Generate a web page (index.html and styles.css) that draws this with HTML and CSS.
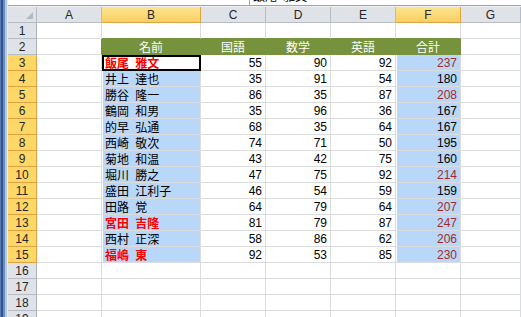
FILE: index.html
```html
<!DOCTYPE html>
<html>
	<head>
		<meta charset="UTF-8">
		<title>成績表</title>
		<link rel="stylesheet" href="styles.css">
	</head>
	<body>
		<div id="app">
			<div class="frame"></div>
			<div class="main">
				<div class="top">
					<div class="namebox"></div>
					<div class="fbar"><span>飯尾 雅文</span></div>
				</div>
				<div class="topgap"></div>
				<div class="sheet">
					<!-- 列見出し -->
					<div class="c corner"><i class="tri"></i></div>
					<div class="c hd">A</div>
					<div class="c hd sel">B</div>
					<div class="c hd">C</div>
					<div class="c hd">D</div>
					<div class="c hd">E</div>
					<div class="c hd sel">F</div>
					<div class="c hd">G</div>
					<!-- 1 -->
					<div class="c rh">1</div>
					<div class="c"></div>
					<div class="c gt"></div>
					<div class="c gt"></div>
					<div class="c gt"></div>
					<div class="c gt"></div>
					<div class="c gt"></div>
					<div class="c"></div>
					<!-- 2 -->
					<div class="c rh">2</div>
					<div class="c gl"></div>
					<div class="c g">名前</div>
					<div class="c g">国語</div>
					<div class="c g">数学</div>
					<div class="c g">英語</div>
					<div class="c g">合計</div>
					<div class="c"></div>
					<!-- 3 -->
					<div class="c rh sel">3</div>
					<div class="c"></div>
					<div class="c act nm">飯尾 雅文</div>
					<div class="c n">55</div>
					<div class="c n">90</div>
					<div class="c n">92</div>
					<div class="c n bl red">237</div>
					<div class="c"></div>
					<!-- 4 -->
					<div class="c rh sel">4</div>
					<div class="c"></div>
					<div class="c bl">井上 達也</div>
					<div class="c n">35</div>
					<div class="c n">91</div>
					<div class="c n">54</div>
					<div class="c n bl">180</div>
					<div class="c"></div>
					<!-- 5 -->
					<div class="c rh sel">5</div>
					<div class="c"></div>
					<div class="c bl">勝谷 隆一</div>
					<div class="c n">86</div>
					<div class="c n">35</div>
					<div class="c n">87</div>
					<div class="c n bl red">208</div>
					<div class="c"></div>
					<!-- 6 -->
					<div class="c rh sel">6</div>
					<div class="c"></div>
					<div class="c bl">鶴岡 和男</div>
					<div class="c n">35</div>
					<div class="c n">96</div>
					<div class="c n">36</div>
					<div class="c n bl">167</div>
					<div class="c"></div>
					<!-- 7 -->
					<div class="c rh sel">7</div>
					<div class="c"></div>
					<div class="c bl">的早 弘通</div>
					<div class="c n">68</div>
					<div class="c n">35</div>
					<div class="c n">64</div>
					<div class="c n bl">167</div>
					<div class="c"></div>
					<!-- 8 -->
					<div class="c rh sel">8</div>
					<div class="c"></div>
					<div class="c bl">西崎 敬次</div>
					<div class="c n">74</div>
					<div class="c n">71</div>
					<div class="c n">50</div>
					<div class="c n bl">195</div>
					<div class="c"></div>
					<!-- 9 -->
					<div class="c rh sel">9</div>
					<div class="c"></div>
					<div class="c bl">菊地 和温</div>
					<div class="c n">43</div>
					<div class="c n">42</div>
					<div class="c n">75</div>
					<div class="c n bl">160</div>
					<div class="c"></div>
					<!-- 10 -->
					<div class="c rh sel">10</div>
					<div class="c"></div>
					<div class="c bl">堀川 勝之</div>
					<div class="c n">47</div>
					<div class="c n">75</div>
					<div class="c n">92</div>
					<div class="c n bl red">214</div>
					<div class="c"></div>
					<!-- 11 -->
					<div class="c rh sel">11</div>
					<div class="c"></div>
					<div class="c bl">盛田 江利子</div>
					<div class="c n">46</div>
					<div class="c n">54</div>
					<div class="c n">59</div>
					<div class="c n bl">159</div>
					<div class="c"></div>
					<!-- 12 -->
					<div class="c rh sel">12</div>
					<div class="c"></div>
					<div class="c bl">田路 覚</div>
					<div class="c n">64</div>
					<div class="c n">79</div>
					<div class="c n">64</div>
					<div class="c n bl red">207</div>
					<div class="c"></div>
					<!-- 13 -->
					<div class="c rh sel">13</div>
					<div class="c"></div>
					<div class="c bl nm">宮田 吉隆</div>
					<div class="c n">81</div>
					<div class="c n">79</div>
					<div class="c n">87</div>
					<div class="c n bl red">247</div>
					<div class="c"></div>
					<!-- 14 -->
					<div class="c rh sel">14</div>
					<div class="c"></div>
					<div class="c bl">西村 正深</div>
					<div class="c n">58</div>
					<div class="c n">86</div>
					<div class="c n">62</div>
					<div class="c n bl red">206</div>
					<div class="c"></div>
					<!-- 15 -->
					<div class="c rh sel">15</div>
					<div class="c"></div>
					<div class="c bl nm">福嶋 東</div>
					<div class="c n">92</div>
					<div class="c n">53</div>
					<div class="c n">85</div>
					<div class="c n bl red">230</div>
					<div class="c"></div>
					<!-- 16 -->
					<div class="c rh">16</div>
					<div class="c"></div><div class="c"></div><div class="c"></div><div class="c"></div><div class="c"></div><div class="c"></div><div class="c"></div>
					<!-- 17 -->
					<div class="c rh">17</div>
					<div class="c"></div><div class="c"></div><div class="c"></div><div class="c"></div><div class="c"></div><div class="c"></div><div class="c"></div>
					<!-- 18 -->
					<div class="c rh">18</div>
					<div class="c"></div><div class="c"></div><div class="c"></div><div class="c"></div><div class="c"></div><div class="c"></div><div class="c"></div>
					<!-- 19 -->
					<div class="c rh">19</div>
					<div class="c"></div><div class="c"></div><div class="c"></div><div class="c"></div><div class="c"></div><div class="c"></div><div class="c"></div>
				</div>
			</div>
		</div>
	</body>
</html>
```

FILE: styles.css
```css
*{
	padding: 0;
	margin: 0;
	box-sizing: border-box;
}
body{
	font-size: 12px;
	font-family: "Liberation Sans", "Noto Sans CJK JP", sans-serif;
	background: #fff;
	color: #000;
}
#app {
	display: flex;
	width: 521px;
	height: 317px;
	overflow: hidden;
}
.frame {
	width: 8px;
	flex-shrink: 0;
	background: linear-gradient(to right, #5a7bb0 0, #5a7bb0 1px, #2f5592 1px, #2f5592 3px, #6b8dc2 3px, #6b8dc2 5px, #b6c8e2 5px, #b6c8e2 7px, #e9eef6 7px);
}
.main {
	flex: 1;
	overflow: hidden;
}
.top {
	display: flex;
	height: 6px;
	border-bottom: 1px solid #a2a2a2;
	overflow: hidden;
}
.namebox {
	width: 242px;
	border-right: 1px solid #a8a8a8;
}
.fbar {
	flex: 1;
	padding-left: 3px;
	overflow: hidden;
	word-spacing: 3px;
}
.fbar span {
	display: block;
	line-height: 13px;
	margin-top: -9px;
}
.topgap {
	height: 1px;
	background: #eef0f3;
}
.sheet {
	display: grid;
	grid-template-columns: 29px 65px 99px 65px 65px 65px 65px 60px;
	grid-auto-rows: 16px;
}
.c {
	display: flex;
	align-items: center;
	padding: 0 3px;
	border-right: 1px solid #dadcde;
	border-bottom: 1px solid #dadcde;
	white-space: nowrap;
	overflow: hidden;
	word-spacing: 3px;
}
.n {
	justify-content: flex-end;
}
/* 見出し */
.hd, .rh, .corner {
	justify-content: center;
	color: #272727;
	background: #dfe3e8;
	border-color: #b5bcc6;
}
.corner {
	justify-content: flex-end;
	align-items: flex-end;
	padding: 0 3px 3px 0;
}
.tri {
	display: block;
	width: 0;
	height: 0;
	border-left: 7px solid transparent;
	border-bottom: 7px solid #b4b9c0;
}
.hd.sel, .rh.sel {
	background: linear-gradient(#fde48f, #f8cf62);
	border-color: #e2a140;
}
.rh {
	border-right-color: #a9b1bb;
}
.rh.sel {
	background: #fed867;
}
/* 表 */
.gt {
	border-bottom-color: #76923c;
}
.gl {
	border-right-color: #76923c;
}
.g {
	justify-content: center;
	background: #76923c;
	border-color: #76923c;
	color: #fff;
}
.bl {
	background: #b9d7f9;
	box-shadow: inset 1px 0 0 #fff;
}
.red {
	color: #a52a2a;
}
.nm {
	color: #f00;
	font-weight: bold;
}
.act {
	background: #fff;
	outline: 2px solid #000;
	outline-offset: -2px;
}
```
